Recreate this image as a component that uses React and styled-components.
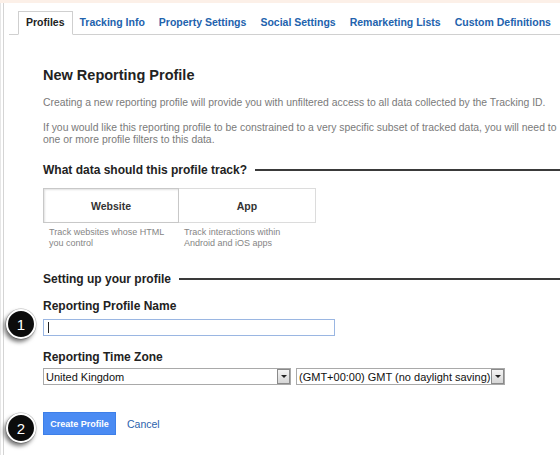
import React from "react";
import styled, { createGlobalStyle } from "styled-components";

const Global = createGlobalStyle`
  html, body { margin: 0; padding: 0; background: #fff; }
  body { font-family: "Liberation Sans", Arial, sans-serif; }
`;

const Page = styled.div`
  position: relative;
  width: 560px;
  height: 455px;
  overflow: hidden;
  display: flex;
  border-top: 3px solid #fcf0e8;
  box-sizing: border-box;
  background: #fff;
`;

const Rail = styled.div`
  flex: 0 0 auto;
  width: 9px;
  box-sizing: border-box;
  border-left: 1px solid #e6e6e6;
  position: relative;
  &::after {
    content: "";
    position: absolute;
    left: 2px;
    top: 0;
    bottom: 0;
    width: 1px;
    background: #d4d4d4;
  }
`;

const Main = styled.div`
  flex: 0 0 auto;
  width: 640px;
`;

const TabBar = styled.div`
  display: flex;
  align-items: flex-end;
  padding: 8px 0 0 9px;
  height: 23px;
  border-bottom: 1px solid #d0d0d0;
`;

const Tab = styled.div`
  height: 22px;
  line-height: 20px;
  padding: 0 7px;
  border: 1px solid ${(p) => (p.$active ? "#cfcfcf" : "transparent")};
  border-bottom: 1px solid ${(p) => (p.$active ? "#fff" : "transparent")};
  margin-bottom: -1px;
  background: ${(p) => (p.$active ? "#fff" : "transparent")};
  font-size: 10.5px;
  font-weight: bold;
  color: ${(p) => (p.$active ? "#222" : "#2262ad")};
  white-space: nowrap;
  margin-right: ${(p) => (p.$active ? "-1px" : "-2px")};
`;

const Content = styled.div`
  padding: 32px 0 0 34px;
  display: flex;
  flex-direction: column;
  align-items: flex-start;
`;

const Title = styled.h1`
  margin: 0;
  font-size: 14.5px;
  line-height: 17px;
  font-weight: bold;
  color: #222;
`;

const Para = styled.p`
  margin: ${(p) => p.$mt}px 0 0;
  font-size: 10.4px;
  line-height: 12px;
  color: #7a7a7a;
  white-space: nowrap;
`;

const SectionHead = styled.div`
  display: flex;
  align-items: center;
  gap: 8px;
  width: 100%;
  margin-top: ${(p) => p.$mt}px;
  font-size: 12px;
  line-height: 14px;
  font-weight: bold;
  color: #222;
  white-space: nowrap;
  &::after {
    content: "";
    flex: 1;
    height: 2px;
    background: #3a3a3a;
  }
`;

const Tiles = styled.div`
  display: grid;
  grid-template-columns: 136px 137px;
  margin-top: 11px;
`;

const Choice = styled.div`
  display: flex;
  flex-direction: column;
`;

const Tile = styled.div`
  height: 35px;
  box-sizing: border-box;
  display: flex;
  align-items: center;
  justify-content: center;
  border: 1px solid #dadada;
  border-left: ${(p) => (p.$last ? "none" : "1px solid #cfcfcf")};
  box-shadow: ${(p) => (p.$selected ? "inset 1px 1px 2px rgba(0,0,0,0.12)" : "none")};
  border-color: ${(p) => (p.$selected ? "#c8c8c8" : "#dcdcdc")};
  font-size: 10.5px;
  font-weight: bold;
  color: #333;
`;

const Caption = styled.div`
  margin-top: 4px;
  padding-left: ${(p) => (p.$last ? 5 : 6)}px;
  font-size: 9px;
  line-height: 11px;
  color: #858585;
`;

const Label = styled.div`
  margin-top: ${(p) => p.$mt}px;
  font-size: 12px;
  line-height: 14px;
  font-weight: bold;
  color: #222;
`;

const TextInput = styled.div`
  margin-top: 6px;
  width: 292px;
  height: 17px;
  box-sizing: border-box;
  border: 1px solid #9ab6e2;
  display: flex;
  align-items: center;
  padding-left: 4px;
  &::before {
    content: "";
    width: 1px;
    height: 11px;
    background: #222;
  }
`;

const SelectRow = styled.div`
  display: flex;
  gap: 5px;
  margin-top: 4px;
`;

const Select = styled.div`
  width: ${(p) => p.$w}px;
  height: 17px;
  box-sizing: border-box;
  border: 1px solid #a9a9a9;
  display: flex;
  align-items: center;
  font-size: 11px;
  color: #111;
  background: #fff;
`;

const SelectText = styled.span`
  flex: 1;
  padding-left: 2px;
  white-space: nowrap;
  overflow: hidden;
`;

const DropBtn = styled.span`
  width: 13px;
  height: 15px;
  box-sizing: border-box;
  border: 1px solid #8a8a8a;
  background: linear-gradient(#f4f4f4, #d6d6d6);
  display: flex;
  align-items: center;
  justify-content: center;
  &::after {
    content: "";
    border-left: 3px solid transparent;
    border-right: 3px solid transparent;
    border-top: 3px solid #222;
  }
`;

const Actions = styled.div`
  display: flex;
  align-items: center;
  gap: 11px;
  margin-top: 27px;
`;

const PrimaryButton = styled.button`
  width: 73px;
  height: 23px;
  padding: 0;
  border: 1px solid #3d7fe8;
  background: #4a8bf3;
  color: #fff;
  font-family: "Liberation Sans", Arial, sans-serif;
  font-size: 9px;
  font-weight: bold;
`;

const LinkText = styled.span`
  font-size: 10.5px;
  color: #2a62ad;
`;

const Badge = styled.div`
  position: absolute;
  left: ${(p) => p.$x - 15}px;
  top: ${(p) => p.$y - 15}px;
  width: 30px;
  height: 30px;
  box-sizing: border-box;
  border-radius: 50%;
  border: 2px solid #fff;
  background: #0c0c0c;
  box-shadow: -2px 3px 4px rgba(0, 0, 0, 0.55), 0 0 0 0.5px #bbb;
  color: #fff;
  font-family: "Liberation Sans", Arial, sans-serif;
  font-size: 15px;
  display: flex;
  align-items: center;
  justify-content: center;
`;

const tabs = [
  "Profiles",
  "Tracking Info",
  "Property Settings",
  "Social Settings",
  "Remarketing Lists",
  "Custom Definitions",
];

export default function App() {
  return (
    <>
      <Global />
      <Page>
        <Rail />
        <Main>
          <TabBar>
            {tabs.map((t, i) => (
              <Tab key={t} $active={i === 0}>
                {t}
              </Tab>
            ))}
          </TabBar>
          <Content>
            <Title>New Reporting Profile</Title>
            <Para $mt={13}>
              Creating a new reporting profile will provide you with unfiltered access to all data collected by the Tracking ID.
            </Para>
            <Para $mt={13}>
              If you would like this reporting profile to be constrained to a very specific subset of tracked data, you will need to
              <br />
              one or more profile filters to this data.
            </Para>
            <SectionHead $mt={17}>What data should this profile track?</SectionHead>
            <Tiles>
              <Choice>
                <Tile $selected>Website</Tile>
                <Caption>
                  Track websites whose HTML
                  <br />
                  you control
                </Caption>
              </Choice>
              <Choice>
                <Tile $last>App</Tile>
                <Caption $last>
                  Track interactions within
                  <br />
                  Android and iOS apps
                </Caption>
              </Choice>
            </Tiles>
            <SectionHead $mt={23}>Setting up your profile</SectionHead>
            <Label $mt={13}>Reporting Profile Name</Label>
            <TextInput />
            <Label $mt={14}>Reporting Time Zone</Label>
            <SelectRow>
              <Select $w={248}>
                <SelectText>United Kingdom</SelectText>
                <DropBtn />
              </Select>
              <Select $w={209}>
                <SelectText>(GMT+00:00) GMT (no daylight saving)</SelectText>
                <DropBtn />
              </Select>
            </SelectRow>
            <Actions>
              <PrimaryButton>Create Profile</PrimaryButton>
              <LinkText>Cancel</LinkText>
            </Actions>
          </Content>
        </Main>
        <Badge $x={21} $y={321}>1</Badge>
        <Badge $x={21} $y={425}>2</Badge>
      </Page>
    </>
  );
}
